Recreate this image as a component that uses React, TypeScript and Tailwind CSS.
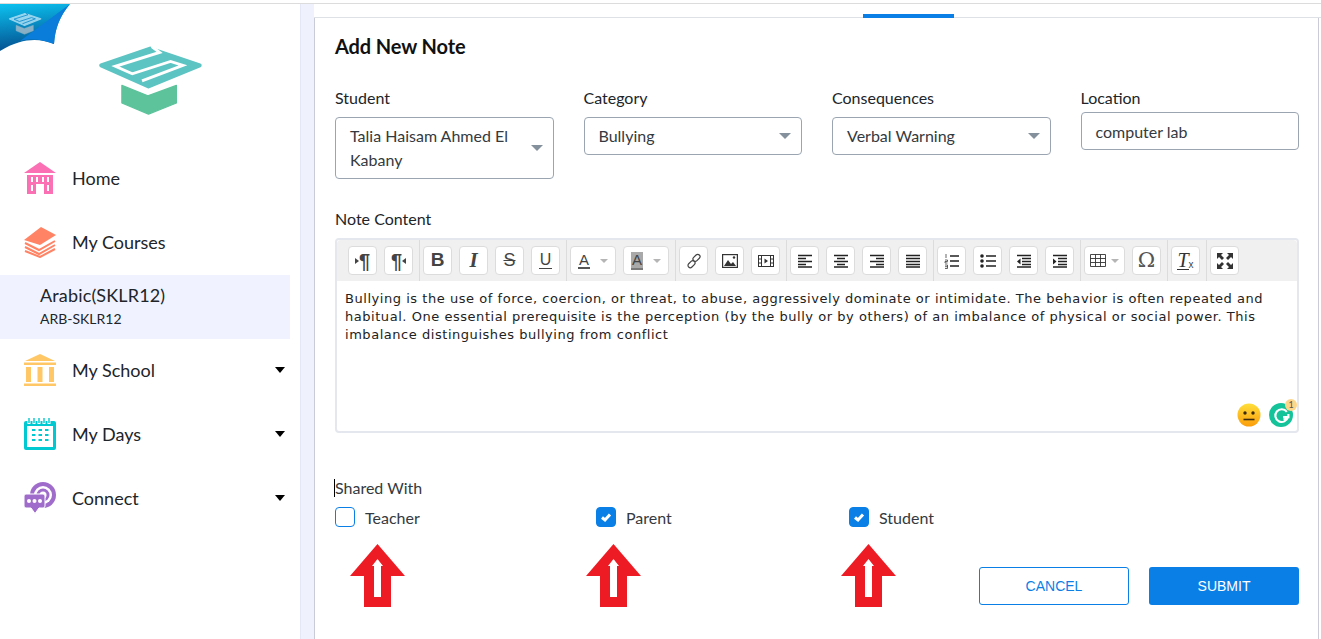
import { ReactNode } from "react";

const lato = "font-['Lato','Noto_Sans',sans-serif]";

function Logo({ className, cap = "#5cc4c2", box = "#5cc39b", cut = "#ffffff" }: { className?: string; cap?: string; box?: string; cut?: string }) {
    return (
        <svg viewBox="0 0 360 225" className={className}>
            <path d="M34 72 L185 20 L338 72 L180 137 Z" fill={cap} stroke={cap} strokeWidth="12" strokeLinejoin="round" />
            <path d="M190 14 L214 32 L78 75 L130 98 L248 60 L286 72 L160 120" fill="none" stroke={cut} strokeWidth="9" />
            <path d="M98 134 L178 166 L266 134 L266 188 L180 222 L98 188 Z" fill={box} stroke={box} strokeWidth="4" strokeLinejoin="round" />
        </svg>
    );
}

function Ribbon() {
    return (
        <div className="absolute left-0 top-0 w-[70px] h-[48px] overflow-hidden">
            <svg viewBox="0 0 70 48" className="w-full h-full">
                <defs>
                    <linearGradient id="rb" x1="0.1" y1="0" x2="0.25" y2="1">
                        <stop offset="0" stopColor="#0cc0ee" />
                        <stop offset="1" stopColor="#034f8f" />
                    </linearGradient>
                </defs>
                <path d="M0 0 L70 0 C60 12 55 24 54 40 C42 35 24 32 0 47 Z" fill="url(#rb)" />
                <path d="M70 0 C60 12 55 24 54 40 C44 36 32 34 20 37 Z" fill="#0a7dda" />
            </svg>
            <Logo className="absolute left-[6px] top-[7px] w-[37px] h-[24px] opacity-80" cap="#b9e4f5" box="#a9bcc9" cut="#1f90d0" />
        </div>
    );
}

function HomeIcon() {
    return (
        <svg viewBox="0 0 32 32" className="w-8 h-8" fill="#fb6fb4">
            <path d="M16 0 L32 11 L0 11 Z" />
            <path fillRule="evenodd" d="M3 13 H29 V32 H20 V22 H12 V32 H3 Z M7 15 V20 H9 V15 Z M12 15 V20 H14 V15 Z M18 15 V20 H20 V15 Z M23 15 V20 H25 V15 Z M7 23 V29 H9 V23 Z M23 23 V29 H25 V23 Z" />
        </svg>
    );
}

function BooksIcon() {
    return (
        <svg viewBox="0 0 32 32" className="w-8 h-8">
            <path d="M17 1 L32 9 L16 19 L0 14 Z" fill="#ff8364" />
            <path d="M1 17 L15 24 L31 15 M1 21 L15 28 L31 19 M1 25 L16 31 L31 23" fill="none" stroke="#ff8364" strokeWidth="2" />
        </svg>
    );
}

function SchoolIcon() {
    return (
        <svg viewBox="0 0 32 32" className="w-8 h-8" fill="#ffc766">
            <path d="M16 0 L31 7 H1 Z" />
            <rect x="0" y="8.5" width="32" height="2.5" />
            <rect x="2" y="13" width="5" height="15" />
            <rect x="13.5" y="13" width="5" height="15" />
            <rect x="25" y="13" width="5" height="15" />
            <rect x="0" y="29.5" width="32" height="2.5" />
        </svg>
    );
}

function CalendarIcon() {
    const cells = [10, 15, 20].flatMap((y) => [8, 14.5, 21].map((x) => ({ x, y })));
    return (
        <svg viewBox="0 0 32 32" className="w-8 h-8">
            <rect x="0" y="3" width="32" height="29" rx="2" fill="#00c9d1" />
            <rect x="3" y="8" width="26" height="21" fill="#ffffff" />
            <path d="M5 0 V6 M10 0 V6 M15 0 V6 M20 0 V6 M25 0 V6" stroke="#ffffff" strokeWidth="3" />
            <path d="M5 0 V5 M10 0 V5 M15 0 V5 M20 0 V5 M25 0 V5" stroke="#00c9d1" strokeWidth="1.4" />
            {cells.map((c) => (
                <rect key={`${c.x}-${c.y}`} x={c.x} y={c.y + 1} width="3.5" height="2" fill="#00c9d1" />
            ))}
        </svg>
    );
}

function ConnectIcon() {
    return (
        <svg viewBox="0 0 32 32" className="w-8 h-8">
            <circle cx="19" cy="13" r="13" fill="#a06ccc" />
            <circle cx="19" cy="13" r="9" fill="#ffffff" />
            <circle cx="19" cy="13" r="6.5" fill="#a06ccc" />
            <circle cx="19" cy="13" r="3.5" fill="#ffffff" />
            <path d="M2 12 H19 Q21 12 21 14 V24 Q21 26 19 26 H15 L11 31.5 L7 26 H2 Q0 26 0 24 V14 Q0 12 2 12 Z" fill="#a06ccc" stroke="#ffffff" strokeWidth="1" />
            <circle cx="5" cy="19" r="2" fill="#ffffff" />
            <circle cx="10.5" cy="19" r="2" fill="#ffffff" />
            <circle cx="16" cy="19" r="2" fill="#ffffff" />
        </svg>
    );
}

function NavItem({ icon, label, caret }: { icon: ReactNode; label: string; caret?: boolean }) {
    return (
        <div className="h-16 flex items-center pl-6 pr-[15px] text-[18px] text-[#212529]">
            {icon}
            <span className="ml-4 flex-1">{label}</span>
            {caret && <span className="w-0 h-0 border-x-[5.5px] border-x-transparent border-t-[6px] border-t-black" />}
        </div>
    );
}

function Sidebar() {
    return (
        <aside className="w-[300px] shrink-0 bg-white relative">
            <Ribbon />
            <div className="h-[142px] pt-[38px] pl-[90px]">
                <Logo className="w-[117px] h-[73px]" />
            </div>
            <NavItem icon={<HomeIcon />} label="Home" />
            <NavItem icon={<BooksIcon />} label="My Courses" />
            <div className="w-[290px] h-16 mt-px -mb-px bg-[#f0f3ff] pl-10 pt-[8px] text-[#212529]">
                <div className="text-[18px] leading-[24px] tracking-[0.15px]">Arabic(SKLR12)</div>
                <div className="text-[14px] leading-[20px] mt-[2px]">ARB-SKLR12</div>
            </div>
            <NavItem icon={<SchoolIcon />} label="My School" caret />
            <NavItem icon={<CalendarIcon />} label="My Days" caret />
            <NavItem icon={<ConnectIcon />} label="Connect" caret />
        </aside>
    );
}

function Chevron() {
    return <span className="w-0 h-0 border-x-[6px] border-x-transparent border-t-[6px] border-t-[#84909c]" />;
}

function Select({ label, children, tall }: { label: string; children: ReactNode; tall?: boolean }) {
    return (
        <div>
            <div className="text-[16px] leading-[18px] text-[#212529] mb-[10px]">{label}</div>
            <div className={`border border-[#9aa5b1] rounded-[4px] flex items-center justify-between pl-[14px] pr-[10px] text-[16px] leading-[24px] text-[#343a40] py-[6px] ${tall ? "" : "h-[38px]"}`}>
                <span className={tall ? "w-[170px]" : ""}>{children}</span>
                <Chevron />
            </div>
        </div>
    );
}

function Line({ d }: { d: string }) {
    return (
        <svg viewBox="0 0 16 16" className="w-4 h-4">
            <path d={d} stroke="#222222" strokeWidth="1.5" fill="none" />
        </svg>
    );
}

const glyph = "font-['Liberation_Sans',sans-serif] text-[#444444]";

function ToolBtn({ children, wide }: { children: ReactNode; wide?: string }) {
    return (
        <div className={`${wide ?? "w-[29px]"} h-[29px] bg-white border border-[#dcdcdc] rounded-[4px] flex items-center justify-center`}>
            {children}
        </div>
    );
}

function Group({ children, last }: { children: ReactNode; last?: boolean }) {
    return (
        <div className={`flex pr-[6px] mr-[3px] ${last ? "" : "border-r border-[#dcdcdc]"}`}>
            <div className="flex gap-[7px] items-center h-[29px] my-[6px]">{children}</div>
        </div>
    );
}

const ALIGN_LEFT = "M1 2.5 H15 M1 5.5 H9 M1 8.5 H15 M1 11.5 H9 M1 14 H15";
const ALIGN_CENTER = "M1 2.5 H15 M4 5.5 H12 M1 8.5 H15 M4 11.5 H12 M1 14 H15";
const ALIGN_RIGHT = "M1 2.5 H15 M7 5.5 H15 M1 8.5 H15 M7 11.5 H15 M1 14 H15";
const ALIGN_JUSTIFY = "M1 2.5 H15 M1 5.5 H15 M1 8.5 H15 M1 11.5 H15 M1 14 H15";

function Toolbar() {
    return (
        <div className="h-[41px] bg-[#f0f0f0] rounded-t-[4px] pl-[11px] flex">
            <Group>
                <ToolBtn>
                    <span className="w-0 h-0 border-y-[3.5px] border-y-transparent border-l-[4px] border-l-[#444444]" />
                    <span className={`${glyph} text-[20px] font-bold leading-none`}>¶</span>
                </ToolBtn>
                <ToolBtn>
                    <span className={`${glyph} text-[20px] font-bold leading-none`}>¶</span>
                    <span className="w-0 h-0 border-y-[3.5px] border-y-transparent border-r-[4px] border-r-[#444444]" />
                </ToolBtn>
            </Group>
            <Group>
                <ToolBtn><span className={`${glyph} text-[19px] font-bold`}>B</span></ToolBtn>
                <ToolBtn><span className="font-['Liberation_Serif',serif] text-[#444444] text-[21px] italic font-bold">I</span></ToolBtn>
                <ToolBtn><span className={`${glyph} text-[18px] line-through`}>S</span></ToolBtn>
                <ToolBtn><span className={`${glyph} text-[16px] leading-[16px] border-b-[1.5px] border-[#444444] px-[1px]`}>U</span></ToolBtn>
            </Group>
            <Group>
                <ToolBtn wide="w-[46px]">
                    <span className={`${glyph} text-[15px] leading-[15px] border-b-2 border-[#555555] px-[1px] font-medium`}>A</span>
                    <span className="ml-[10px] w-0 h-0 border-x-[4px] border-x-transparent border-t-[4px] border-t-[#b5b5b5]" />
                </ToolBtn>
                <ToolBtn wide="w-[46px]">
                    <span className={`${glyph} text-[15px] leading-[16px] bg-[#a9a9a9] border-b-2 border-[#7a7a7a] px-[1px] font-medium`}>A</span>
                    <span className="ml-[10px] w-0 h-0 border-x-[4px] border-x-transparent border-t-[4px] border-t-[#b5b5b5]" />
                </ToolBtn>
            </Group>
            <Group>
                <ToolBtn>
                    <svg viewBox="0 0 16 16" className="w-4 h-4" fill="none" stroke="#444444" strokeWidth="1.2">
                        <rect x="8.2" y="0.8" width="4.6" height="8" rx="2.3" transform="rotate(45 10.5 4.8)" />
                        <rect x="3.2" y="7.2" width="4.6" height="8" rx="2.3" transform="rotate(45 5.5 11.2)" />
                    </svg>
                </ToolBtn>
                <ToolBtn>
                    <svg viewBox="0 0 16 14" className="w-4 h-[14px]">
                        <rect x="0.6" y="0.6" width="14.8" height="12.8" fill="none" stroke="#333333" strokeWidth="1.2" />
                        <path d="M2 12 L6 6 L9 10 L11 8 L14 12 Z" fill="#333333" />
                        <circle cx="12" cy="3.5" r="1.2" fill="#333333" />
                    </svg>
                </ToolBtn>
                <ToolBtn>
                    <svg viewBox="0 0 16 12" className="w-4 h-3">
                        <rect x="0.5" y="0.5" width="15" height="11" fill="none" stroke="#333333" strokeWidth="1" />
                        <path d="M3.5 0.5 V11.5 M12.5 0.5 V11.5 M0.5 4 H3.5 M0.5 8 H3.5 M12.5 4 H15.5 M12.5 8 H15.5" stroke="#333333" strokeWidth="1" />
                        <path d="M6.5 3.5 L10 6 L6.5 8.5 Z" fill="#333333" />
                    </svg>
                </ToolBtn>
            </Group>
            <Group>
                <ToolBtn><Line d={ALIGN_LEFT} /></ToolBtn>
                <ToolBtn><Line d={ALIGN_CENTER} /></ToolBtn>
                <ToolBtn><Line d={ALIGN_RIGHT} /></ToolBtn>
                <ToolBtn><Line d={ALIGN_JUSTIFY} /></ToolBtn>
            </Group>
            <Group>
                <ToolBtn>
                    <svg viewBox="0 0 16 16" className="w-4 h-4">
                        <path d="M6 3 H15 M6 8 H15 M6 13 H15" stroke="#222222" strokeWidth="1.5" />
                        <path d="M2 1 V5 M1 7 H3.5 V8.5 H1 V10 H3.5 M1 12 H3.5 V15.5 H1 M1 13.7 H3.5" stroke="#222222" strokeWidth="0.7" fill="none" />
                    </svg>
                </ToolBtn>
                <ToolBtn>
                    <svg viewBox="0 0 16 16" className="w-4 h-4">
                        <circle cx="2" cy="3" r="1.8" fill="#222222" />
                        <circle cx="2" cy="8" r="1.8" fill="#222222" />
                        <circle cx="2" cy="13" r="1.8" fill="#222222" />
                        <path d="M6 3 H16 M6 8 H16 M6 13 H16" stroke="#222222" strokeWidth="1.5" />
                    </svg>
                </ToolBtn>
                <ToolBtn>
                    <svg viewBox="0 0 16 16" className="w-4 h-4">
                        <path d="M1 2.5 H15 M6 5.5 H15 M6 8.5 H15 M6 11.5 H15 M1 14 H15" stroke="#222222" strokeWidth="1.5" />
                        <path d="M4.5 5.5 L1 8.5 L4.5 11.5 Z" fill="#222222" />
                    </svg>
                </ToolBtn>
                <ToolBtn>
                    <svg viewBox="0 0 16 16" className="w-4 h-4">
                        <path d="M1 2.5 H15 M6 5.5 H15 M6 8.5 H15 M6 11.5 H15 M1 14 H15" stroke="#222222" strokeWidth="1.5" />
                        <path d="M1 5.5 L4.5 8.5 L1 11.5 Z" fill="#222222" />
                    </svg>
                </ToolBtn>
            </Group>
            <Group>
                <ToolBtn wide="w-[41px]">
                    <svg viewBox="0 0 16 13" className="w-4 h-[13px]">
                        <path d="M0.5 0.5 H15.5 V12.5 H0.5 Z M0.5 4.5 H15.5 M0.5 8.5 H15.5 M5.5 0.5 V12.5 M10.5 0.5 V12.5" fill="none" stroke="#333333" strokeWidth="0.9" />
                    </svg>
                    <span className="ml-[5px] w-0 h-0 border-x-[4px] border-x-transparent border-t-[4px] border-t-[#b5b5b5]" />
                </ToolBtn>
                <ToolBtn><span className="font-['DejaVu_Serif',serif] text-[#555555] text-[21px] leading-none">Ω</span></ToolBtn>
            </Group>
            <Group>
                <ToolBtn>
                    <span className="font-['Liberation_Serif',serif] italic text-[#333333] text-[20px] leading-[18px] border-b-[1.5px] border-[#333333]">T</span>
                    <span className={`${glyph} text-[10px] leading-none mt-[8px]`}>x</span>
                </ToolBtn>
            </Group>
            <Group last>
                <ToolBtn>
                    <svg viewBox="0 0 16 16" className="w-4 h-4" fill="#333333">
                        <path d="M0 0 H6 L4 2 L7 5 L5 7 L2 4 L0 6 Z M16 0 V6 L14 4 L11 7 L9 5 L12 2 L10 0 Z M0 16 V10 L2 12 L5 9 L7 11 L4 14 L6 16 Z M16 16 H10 L12 14 L9 11 L11 9 L14 12 L16 10 Z" />
                    </svg>
                </ToolBtn>
            </Group>
        </div>
    );
}

function Editor() {
    return (
        <div className="mt-[10px] h-[195px] border-2 border-[#e4e7ee] rounded-[4px] relative">
            <Toolbar />
            <div className="px-2 pt-[9px] font-['DejaVu_Sans',sans-serif] text-[13px] tracking-[0.54px] leading-[18px] text-[#222222]">
                Bullying is the use of force, coercion, or threat, to abuse, aggressively dominate or intimidate. The behavior is often repeated and habitual. One essential prerequisite is the perception (by the bully or by others) of an imbalance of physical or social power. This imbalance distinguishes bullying from conflict
            </div>
            {/* emoji + grammarly badge sit on top of the text area */}
            <div className="absolute right-[4px] bottom-[4px] flex items-center gap-[8px]">
                <svg viewBox="0 0 24 24" className="w-6 h-6">
                    <defs>
                        <linearGradient id="em" x1="0" y1="0" x2="0" y2="1">
                            <stop offset="0" stopColor="#ffdf3a" />
                            <stop offset="1" stopColor="#fb9d0b" />
                        </linearGradient>
                    </defs>
                    <circle cx="12" cy="12" r="11.5" fill="url(#em)" />
                    <circle cx="8" cy="10" r="1.7" fill="#3a2a10" />
                    <circle cx="16" cy="10" r="1.7" fill="#3a2a10" />
                    <path d="M6.5 16.5 H17.5" stroke="#3a2a10" strokeWidth="1.6" />
                </svg>
                <div className="relative w-6 h-6 rounded-full bg-[#15c39a] flex items-center justify-center">
                    <svg viewBox="0 0 16 16" className="w-[17px] h-[17px]" fill="none" stroke="#ffffff" strokeWidth="2">
                        <path d="M13 4.5 A6 6 0 1 0 14 9.5 H9.5" />
                        <path d="M14.5 6.5 V10.5 M10 12 L14 10" />
                    </svg>
                    <span className="absolute -top-[4px] -right-[4px] w-3 h-3 rounded-full bg-[#fdd68a] text-[9px] leading-3 text-center text-[#555555]">1</span>
                </div>
            </div>
        </div>
    );
}

function Check({ label, checked, w }: { label: string; checked?: boolean; w?: string }) {
    return (
        <div className={`flex items-center h-5 ${w ?? ""}`}>
            <span className={`w-5 h-5 rounded-[4px] border border-[#0a7fe6] flex items-center justify-center ${checked ? "bg-[#0a7fe6]" : "bg-white"}`}>
                {checked && (
                    <svg viewBox="0 0 12 12" className="w-3 h-3" fill="none" stroke="#ffffff" strokeWidth="3">
                        <path d="M2 6.5 L5 9 L10 3.5" />
                    </svg>
                )}
            </span>
            <span className="ml-[10px] pt-px text-[16px] leading-[20px] text-[#343a40]">{label}</span>
        </div>
    );
}

function Arrow({ className }: { className?: string }) {
    return (
        <svg viewBox="0 0 55 63" className={`w-[55px] h-[63px] shrink-0 ${className ?? ""}`}>
            <path d="M27.5 0 L55 32 H41 V63 H14 V32 H0 Z" fill="#ed1c24" />
            <path d="M27.5 15 L33 22 H31 V53 H24 V22 H22 Z" fill="#ffffff" />
        </svg>
    );
}

export default function App() {
    return (
        <div className={`${lato} w-[1321px] h-[639px] overflow-hidden bg-white flex flex-col`}>
            <div className="h-[4px] border-b border-[#dcdcdc] shrink-0" />
            <div className="flex flex-1 min-h-0">
                <Sidebar />
                <div className="w-[14px] shrink-0 bg-[#eff2fc] border-l border-[#e4e8f6]" />
                <main className="flex-1 min-w-0 flex flex-col">
                    <div className="h-[14px] border-b border-[#dee2e6] relative">
                        <div className="absolute left-[549px] -bottom-px w-[91px] h-[4px] bg-[#0a7fe6]" />
                    </div>
                    <div className="w-[1005px] flex-1 border-x border-x-[#c9ccd6] pl-[20px] pr-[19px]">
                        <h1 className="text-[20px] leading-[24px] font-bold text-[#111111] mt-[16px] tracking-[-0.1px]">Add New Note</h1>
                        <div className="grid grid-cols-4 gap-x-[30px] mt-[31px] h-[112px] items-start">
                            <Select label="Student" tall>Talia Haisam Ahmed El Kabany</Select>
                            <Select label="Category">Bullying</Select>
                            <Select label="Consequences">Verbal Warning</Select>
                            <div>
                                <div className="text-[16px] leading-[18px] text-[#212529] mb-[5px]">Location</div>
                                <div className="h-[38px] border border-[#9aa5b1] rounded-[4px] pl-[14px] text-[16px] leading-[38px] text-[#343a40]">computer lab</div>
                            </div>
                        </div>
                        <div className="text-[16px] leading-[18px] text-[#212529] mt-[9px]">Note Content</div>
                        <Editor />
                        <div className="mt-[46px] text-[16px] leading-[18px] text-[#343a40] border-l border-black w-fit -ml-px">Shared With</div>
                        <div className="flex mt-[10px]">
                            <Check label="Teacher" w="w-[261px]" />
                            <Check label="Parent" checked w="w-[253px]" />
                            <Check label="Student" checked />
                        </div>
                        <div className="flex items-start mt-[17px]">
                            <Arrow className="ml-[15px]" />
                            <Arrow className="ml-[181px]" />
                            <Arrow className="ml-[200px]" />
                            <div className="ml-auto mt-[23px] flex gap-[20px] font-['Liberation_Sans',sans-serif] text-[14px]">
                                <div className="w-[150px] h-[38px] border border-[#0a7fe6] rounded-[3px] text-[#0a7fe6] flex items-center justify-center">CANCEL</div>
                                <div className="w-[150px] h-[38px] bg-[#0a7fe6] rounded-[3px] text-white flex items-center justify-center">SUBMIT</div>
                            </div>
                        </div>
                    </div>
                </main>
            </div>
        </div>
    );
}
